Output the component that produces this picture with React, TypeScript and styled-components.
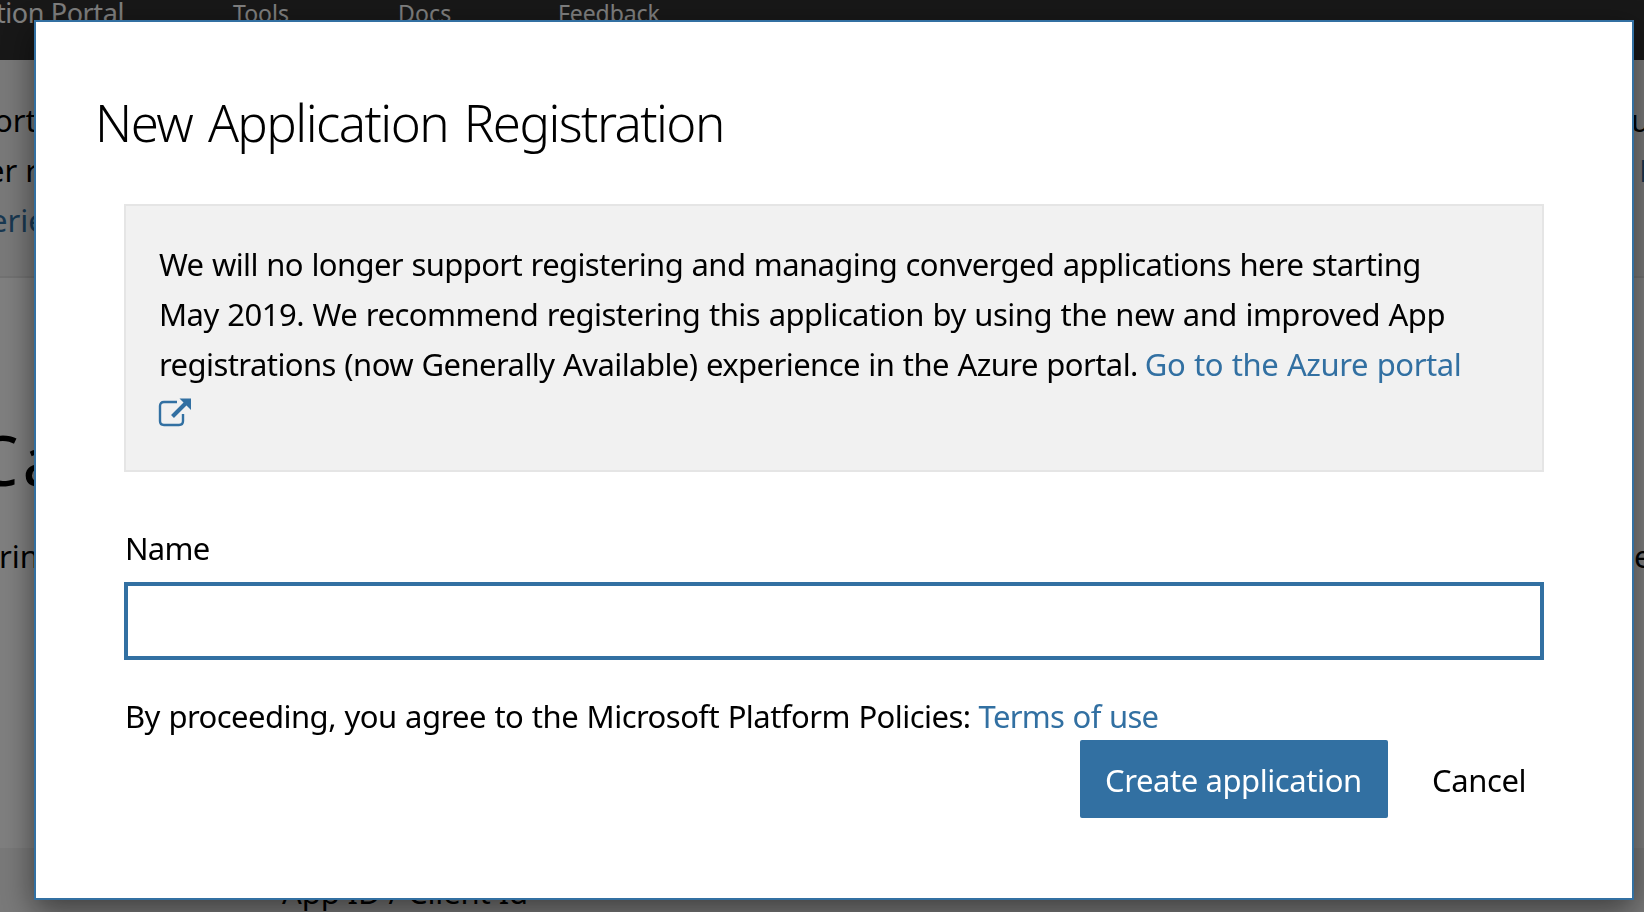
import React from 'react';
import styled, { createGlobalStyle } from 'styled-components';

const blue = '#3270a2';

const GlobalStyle = createGlobalStyle`
  * { box-sizing: border-box; }
  body {
    margin: 0;
    overflow: hidden;
    background: #fff;
    color: #000;
    font-family: "Noto Sans", "Open Sans", sans-serif;
    font-size: 31px;
    line-height: 50px;
  }
  h1, h2, p { margin: 0; }
`;

const Page = styled.div`
  display: flex;
  flex-direction: column;
  height: 912px;
  overflow: hidden;
  white-space: nowrap;
`;

const Header = styled.header`
  display: flex;
  flex: none;
  height: 60px;
  background: #303030;
  color: #fff;
  line-height: 26px;
`;

const Brand = styled.div`
  display: flex;
  justify-content: flex-end;
  width: 124px;
  font-size: 27px;
  letter-spacing: -0.4px;
`;

const Nav = styled.nav`
  display: flex;
  padding-left: 109px;
  font-size: 23px;
  line-height: 27px;
`;

const NavItem = styled.a<{ $width: number; $spacing: number }>`
  width: ${(p) => p.$width}px;
  letter-spacing: ${(p) => p.$spacing}px;
`;

const Banner = styled.section`
  flex: none;
  height: 218px;
  padding-top: 35px;
  background: #f2f2f2;
  border-bottom: 2px solid #e5e5e5;
`;

const EdgeLine = styled.div<{ $shift: number; $link?: boolean }>`
  display: flex;
  justify-content: space-between;
  margin-left: ${(p) => p.$shift}px;
  color: ${(p) => (p.$link ? blue : '#000')};
`;

const LineEnd = styled.span<{ $width: number; $link?: boolean }>`
  width: ${(p) => p.$width}px;
  color: ${(p) => (p.$link ? blue : '#000')};
`;

const Intro = styled.section`
  flex: none;
  height: 570px;
  padding-top: 136px;
`;

const IntroTitle = styled.h1`
  margin-left: -25px;
  margin-bottom: 27px;
  font-size: 69px;
  font-weight: 400;
  line-height: 90px;
  letter-spacing: 4px;
`;

const TableHead = styled.section`
  flex: 1;
  padding: 19px 0 0 282px;
  background: #f2f2f2;
  letter-spacing: -0.1px;
`;

const Backdrop = styled.div`
  position: fixed;
  inset: 0;
  padding: 20px 10px 12px 34px;
  background: rgba(0, 0, 0, 0.5);
`;

const Dialog = styled.div`
  height: 880px;
  padding: 65px 88px 0;
  background: #fff;
  border: 2px solid ${blue};
  box-shadow: 0 10px 30px rgba(0, 0, 0, 0.5);
  white-space: nowrap;
`;

const DialogTitle = styled.h2`
  margin: 0 0 47px -29px;
  font-size: 51px;
  font-weight: 300;
  line-height: 70px;
  letter-spacing: -1.55px;
  word-spacing: 4px;
`;

const Notice = styled.div`
  height: 268px;
  padding: 33px 31px 0 32px;
  background: #f1f1f1;
  border: 2px solid #e5e5e5;
`;

const Line = styled.div`
  display: flex;
  height: 50px;
  padding-left: 1px;
  white-space: pre;
  word-spacing: 1px;
`;

const Run = styled.span<{ $spacing: number }>`
  letter-spacing: ${(p) => p.$spacing}px;
`;

const Link = styled.a<{ $spacing: number; $gap: number }>`
  margin-left: ${(p) => p.$gap}px;
  color: ${blue};
  letter-spacing: ${(p) => p.$spacing}px;
`;

const LinkIcon = styled.svg`
  display: block;
  margin-top: 9px;
`;

const Label = styled.label`
  display: block;
  margin: 51px 0 9px;
  padding-left: 1px;
  letter-spacing: -0.7px;
`;

const NameInput = styled.input`
  display: block;
  width: 100%;
  height: 78px;
  padding: 0 16px;
  background: #fff;
  border: 4px solid ${blue};
  border-radius: 0;
  outline: none;
  font: inherit;
`;

const Policies = styled.div`
  display: flex;
  height: 49px;
  margin-top: 31px;
  padding-left: 1px;
  line-height: 50px;
  word-spacing: 1px;
`;

const Actions = styled.div`
  display: flex;
  justify-content: flex-end;
`;

const Button = styled.button<{ $primary?: boolean }>`
  width: ${(p) => (p.$primary ? 308 : 156)}px;
  height: 78px;
  padding: 1px 0 0 ${(p) => (p.$primary ? 25 : 44)}px;
  background: ${(p) => (p.$primary ? blue : 'transparent')};
  border: 0;
  border-radius: 2px;
  color: ${(p) => (p.$primary ? '#fff' : '#000')};
  font: inherit;
  letter-spacing: ${(p) => (p.$primary ? -0.42 : -0.4)}px;
  text-align: left;
`;

export default function App() {
  return (
    <>
      <GlobalStyle />
      <Page>
        <Header>
          <Brand>tion Portal</Brand>
          <Nav>
            <NavItem $width={165} $spacing={0}>Tools</NavItem>
            <NavItem $width={160} $spacing={0.2}>Docs</NavItem>
            <NavItem $width={120} $spacing={-0.1}>Feedback</NavItem>
          </Nav>
        </Header>
        <Banner>
          <EdgeLine $shift={-6}>ort<LineEnd $width={13}>u</LineEnd></EdgeLine>
          <EdgeLine $shift={-13}>er r<LineEnd $width={5} $link>R</LineEnd></EdgeLine>
          <EdgeLine $shift={-10} $link>erie</EdgeLine>
        </Banner>
        <Intro>
          <IntroTitle>Ca</IntroTitle>
          <EdgeLine $shift={-1}>rin<LineEnd $width={10}>e</LineEnd></EdgeLine>
        </Intro>
        <TableHead>App ID / Client Id</TableHead>
      </Page>
      <Backdrop>
        <Dialog role="dialog">
          <DialogTitle>New Application Registration</DialogTitle>
          <Notice>
            <Line><Run $spacing={-0.61}>We will no longer support registering and managing converged applications here starting</Run></Line>
            <Line><Run $spacing={-0.51}>May 2019. We recommend registering this application by using the new and improved App</Run></Line>
            <Line>
              <Run $spacing={-0.57}>registrations (now Generally Available) experience in the Azure portal.</Run>
              <Link $gap={7} $spacing={-0.42}>Go to the Azure portal</Link>
            </Line>
            <LinkIcon width="34" height="30" viewBox="0 0 34 30" fill="none">
              <path d="M19 4H6Q2 4 2 8V23Q2 27 6 27H21Q25 27 25 23V16" stroke={blue} strokeWidth="2.4" />
              <path d="M14.5 18.5L28 5" stroke={blue} strokeWidth="4" />
              <path d="M21.5 0.5H33V12Z" fill={blue} />
            </LinkIcon>
          </Notice>
          <Label htmlFor="name">Name</Label>
          <NameInput id="name" />
          <Policies>
            <Run $spacing={-0.54}>By proceeding, you agree to the Microsoft Platform Policies:</Run>
            <Link $gap={8} $spacing={-0.7}>Terms of use</Link>
          </Policies>
          <Actions>
            <Button $primary>Create application</Button>
            <Button>Cancel</Button>
          </Actions>
        </Dialog>
      </Backdrop>
    </>
  );
}
